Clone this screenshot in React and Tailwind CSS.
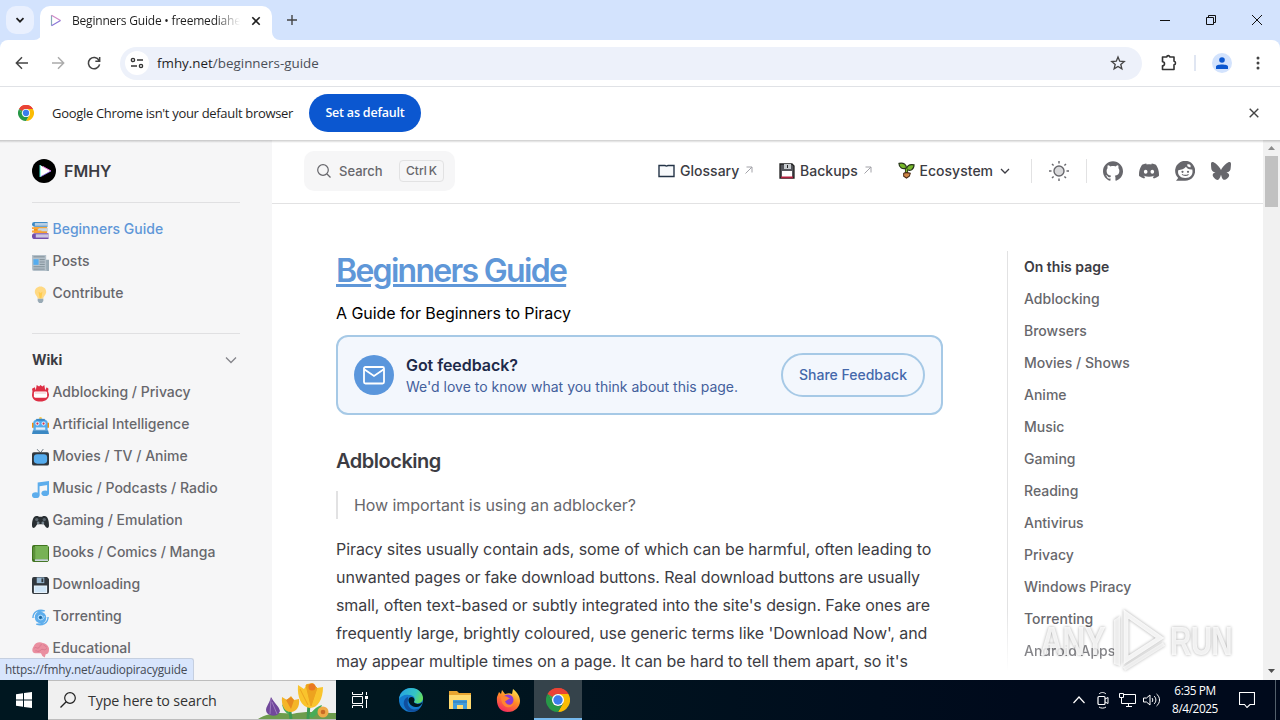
import React from "react";
import { SiGithub, SiDiscord, SiBluesky } from "react-icons/si";

function Svg({ box = "0 0 24 24", className = "", children }) {
  return (
    <svg viewBox={box} className={`shrink-0 ${className}`} fill="none">
      {children}
    </svg>
  );
}

function ChromeLogo({ className }) {
  return (
    <Svg box="0 0 48 48" className={className}>
      <path d="M24 24 3.2 12A24 24 0 0 1 44.8 12Z" fill="#ea4335" />
      <path d="M3.2 12 13.6 30 24 24V12Z" fill="#34a853" />
      <path d="M44.8 12H24V24L34.4 30 24 48A24 24 0 0 0 44.8 12Z" fill="#fbbc04" />
      <path d="M3.2 12A24 24 0 0 1 44.8 12H24A12 12 0 0 0 13.6 18Z" fill="#ea4335" />
      <path d="M3.2 12 13.6 30A12 12 0 0 0 34.4 30L24 48A24 24 0 0 1 3.2 12Z" fill="#279847" />
      <circle cx="24" cy="24" r="12" fill="#fff" />
      <circle cx="24" cy="24" r="9.4" fill="#3b7ded" />
    </Svg>
  );
}

const emoji = {
  books: (
    <>
      <path d="M5 0h28v10H5a5 5 0 0 1 0-10Z" fill="#3b88c3" />
      <path d="M6 2h28v6H6Z" fill="#b8cfe4" />
      <path d="M4 11h28v12H4Z" fill="#f4900c" />
      <path d="M12 13h22v7H12Z" fill="#c9d5de" />
      <path d="M0 11h14v4H0ZM0 18h20v4H0Z" fill="#f9a53b" />
      <path d="M6 24h29v12H6a6 6 0 0 1 0-12Z" fill="#744eaa" />
      <path d="M8 26h27v7H8Z" fill="#ccc6e2" />
    </>
  ),
  news: (
    <>
      <path d="M28 12h8v20a3 3 0 0 1-6 3Z" fill="#99aab5" />
      <path d="M0 2h30v34H4a4 4 0 0 1-4-4Z" fill="#b5c1ca" />
      <path d="M3 6h24M16 12h11M16 17h11M16 22h11M3 27h24M3 32h24" stroke="#7d8c96" strokeWidth="2" />
      <path d="M3 11h11v12H3Z" fill="#55acee" />
    </>
  ),
  bulb: (
    <>
      <path d="M18 1c7 0 12 5 12 11 0 7-6 9-6 15H12c0-6-6-8-6-15C6 6 11 1 18 1Z" fill="#ffd983" />
      <path d="M14 12l4 3 4-3-2 14h-4Z" fill="#ffcc4d" />
      <path d="M12 27h12v5l-3 4h-6l-3-4Z" fill="#99aab5" />
    </>
  ),
  badge: (
    <>
      <path d="M1 13 0 8l6-3 2 6 2-11 5 3 3-3 4 3 4-3 2 11 3-6 4 3-1 5 2 7c0 9-8 15-18 15S0 30 0 21Z" fill="#dd2e44" />
      <rect x="4" y="14" width="28" height="13" rx="3" fill="#fff" />
      <path d="M6 17h24" stroke="#e9a7b0" strokeWidth="1.500" />
    </>
  ),
  robot: (
    <>
      <circle cx="18" cy="3" r="3" fill="#ffcc4d" />
      <path d="M0 12h5v11H0ZM31 12h5v11h-5Z" fill="#f4900c" />
      <path d="M3 11c0-10 30-10 30 0v17H3Z" fill="#55acee" />
      <path d="M9 4h18v4H9Z" fill="#3b88c3" />
      <circle cx="11.500" cy="14" r="4.500" fill="#d9ebf8" />
      <circle cx="24.500" cy="14" r="4.500" fill="#d9ebf8" />
      <circle cx="11.500" cy="14" r="2.300" fill="#dd2e44" />
      <circle cx="24.500" cy="14" r="2.300" fill="#dd2e44" />
      <path d="M8 22h20v5H8Z" fill="#e4f0f8" />
      <path d="M2 28h32l2 8H0Z" fill="#3b88c3" />
    </>
  ),
  tv: (
    <>
      <path d="M10 0l8 8 6-8" stroke="#66757f" strokeWidth="2" />
      <rect x="0" y="7" width="36" height="28" rx="4" fill="#31373d" />
      <rect x="4" y="11" width="28" height="20" rx="7" fill="#55acee" />
    </>
  ),
  music: (
    <>
      <path d="M12 3 36 0v8L16 11v18h-4Z" fill="#5dadec" />
      <path d="M32 4h4v22h-4Z" fill="#5dadec" />
      <ellipse cx="8" cy="30" rx="8" ry="6" fill="#5dadec" />
      <ellipse cx="28" cy="26" rx="8" ry="6" fill="#5dadec" />
    </>
  ),
  game: (
    <>
      <path d="M7 7c5-2 6 0 8 1h6c2-1 3-3 8-1 5 1 7 12 7 19s-5 7-8 2l-3-4H11l-3 4c-3 5-8 5-8-2S2 8 7 7Z" fill="#292f33" />
      <circle cx="10" cy="14" r="3.500" fill="#59646c" />
      <circle cx="26" cy="14" r="3.500" fill="#59646c" />
      <circle cx="13" cy="21" r="3" fill="#77858f" />
      <circle cx="23" cy="21" r="3" fill="#77858f" />
    </>
  ),
  book: (
    <>
      <path d="M4 0h28l4 4v29l-3 3H4a4 4 0 0 1-4-4V4a4 4 0 0 1 4-4Z" fill="#3e721d" />
      <path d="M6 30h28v4H6Z" fill="#ccd6dd" />
      <path d="M6 2h28v28H6Z" fill="#77b255" />
      <path d="M2 4h5v26H2Z" fill="#5c913b" />
    </>
  ),
  disk: (
    <>
      <path d="M4 0h28l4 4v28a4 4 0 0 1-4 4H4a4 4 0 0 1-4-4V4a4 4 0 0 1 4-4Z" fill="#31373d" />
      <path d="M4 18h28v16H4Z" fill="#e9f3fb" />
      <path d="M10 1h16v12H10Z" fill="#99b9d3" />
      <path d="M20 3h4v8h-4Z" fill="#31373d" />
      <path d="M6 20h24v12H6Z" fill="#cfe5f7" />
    </>
  ),
  cyclone: (
    <>
      <circle cx="18" cy="18" r="12" fill="#5dadec" />
      <path d="M2 19C2 6 14 0 27 4 16 3 8 8 7 18M34 17c0 13-12 19-25 15 11 1 19-4 20-14" stroke="#5dadec" strokeWidth="3" />
      <path d="M23 18a5 5 0 1 0-5 5c6 0 8-4 8-8" stroke="#b9ddfb" strokeWidth="2" />
      <circle cx="18" cy="18" r="3" fill="#226699" />
    </>
  ),
  brain: (
    <>
      <path d="M3 12C6 4 15 1 23 4c8 1 14 8 13 15 0 6-3 9-7 9l-2 7-5-3-3-6H7C0 26-1 17 3 12Z" fill="#ea8fa0" />
      <path d="M5 15c4-4 6 3 10-1s1-7 6-6M14 21c4 2 5-6 10-3s6-4 8-1M24 8c5 1 4 5 7 5M7 21c2-2 4 2 8 1" stroke="#d27288" strokeWidth="1.500" />
    </>
  ),
};

function SideItem({ icon, label, active }) {
  return (
    <div className="flex h-8 items-center">
      <Svg box="0 0 36 36" className="mt-[3px] h-[17px] w-[17px]">{emoji[icon]}</Svg>
      <span className={`ml-[3.500px] whitespace-nowrap text-sm font-medium ${active ? "text-[#5f97d8]" : "text-[#67676c]"}`}>{label}</span>
    </div>
  );
}

const topItems = [
  ["books", "Beginners Guide"],
  ["news", "Posts"],
  ["bulb", "Contribute"],
];
const wikiItems = [
  ["badge", "Adblocking / Privacy"],
  ["robot", "Artificial Intelligence"],
  ["tv", "Movies / TV / Anime"],
  ["music", "Music / Podcasts / Radio"],
  ["game", "Gaming / Emulation"],
  ["book", "Books / Comics / Manga"],
  ["disk", "Downloading"],
  ["cyclone", "Torrenting"],
  ["brain", "Educational"],
];
const outline = ["Adblocking", "Browsers", "Movies / Shows", "Anime", "Music", "Gaming", "Reading", "Antivirus", "Privacy", "Windows Piracy", "Torrenting", "Android Apps"];

const paragraph = [
  "Piracy sites usually contain ads, some of which can be harmful, often leading to",
  "unwanted pages or fake download buttons. Real download buttons are usually",
  "small, often text-based or subtly integrated into the site's design. Fake ones are",
  "frequently large, brightly coloured, use generic terms like 'Download Now', and",
  "may appear multiple times on a page. It can be hard to tell them apart, so it's",
];

function TabStrip() {
  return (
    <div className="flex h-10 items-start bg-[#d3e3fd]">
      <div className="ml-1.5 mt-1.5 flex h-7 w-7 items-center justify-center rounded-[10px] bg-[#e9f0fe]">
        <Svg box="0 0 10 10" className="h-2.5 w-2.5"><path d="M1.500 3.200 5 6.700l3.500-3.500" stroke="#1f1f1f" strokeWidth="1.700" /></Svg>
      </div>
      <Svg box="0 0 8 8" className="mt-8 h-2 w-2"><path d="M-2 8h10V0a8 8 0 0 1-8 8Z" fill="#fff" /></Svg>
      <div className="-ml-[2px] mt-1.5 flex h-[34px] w-[232px] items-center rounded-t-[10px] bg-white pb-[5px]">
        <Svg box="0 0 12 13" className="ml-[10px] h-[13px] w-3">
          <path d="M1.500 1.200v10.300" stroke="#86a9b9" strokeWidth="1.200" />
          <path d="m1.500 1.200 9 5.300" stroke="#d18ac8" strokeWidth="1.200" />
          <path d="m1.500 11.700 9-5.200" stroke="#8b76d8" strokeWidth="1.200" />
        </Svg>
        <div className="ml-[10px] w-[168px] overflow-hidden whitespace-nowrap bg-linear-to-r from-[#1f1f1f] from-85% to-transparent bg-clip-text font-['Open_Sans',sans-serif] text-xs tracking-[-0.2px] text-transparent">Beginners Guide • freemediaheckyeah</div>
        <Svg box="0 0 10 10" className="ml-[11px] h-2.5 w-2.5"><path d="m1.300 1.300 7.400 7.400M8.700 1.300 1.300 8.700" stroke="#1f1f1f" strokeWidth="1.600" /></Svg>
      </div>
      <Svg box="0 0 8 8" className="mt-8 h-2 w-2"><path d="M8 8H0V0a8 8 0 0 0 8 8Z" fill="#fff" /></Svg>
      <Svg box="0 0 10 10" className="ml-[7px] mt-[15px] h-2.5 w-2.5"><path d="M5 0v10M0 5h10" stroke="#444" strokeWidth="1.400" /></Svg>
      <div className="ml-auto mr-[18px] mt-[15px] flex gap-[36px]">
        <Svg box="0 0 10 10" className="h-2.5 w-2.5"><path d="M0 5.500h10" stroke="#111" /></Svg>
        <Svg box="0 0 10 10" className="h-2.5 w-2.5"><path d="M.5 2.500h7v7h-7ZM2.500 2.500v-2h7v7h-2" stroke="#111" /></Svg>
        <Svg box="0 0 10 10" className="h-2.5 w-2.5"><path d="m0 0 10 10M10 0 0 10" stroke="#111" /></Svg>
      </div>
    </div>
  );
}

function Toolbar() {
  return (
    <div className="bg-[#d3e3fd]">
      <div className="flex h-[46px] items-center rounded-t-[8px] bg-white pl-[14px]">
        <Svg className="h-4 w-4"><path d="M21 12H4M12 3.500 3.500 12l8.500 8.500" stroke="#444" strokeWidth="2.200" /></Svg>
        <Svg className="ml-5 h-4 w-4"><path d="M3 12h17M12 3.500l8.500 8.500-8.500 8.500" stroke="#ababab" strokeWidth="2.200" /></Svg>
        <Svg className="ml-5 h-4 w-4"><path d="M19.500 8a8.500 8.500 0 1 0 .9 6M20.500 3v6.500H14" stroke="#444" strokeWidth="2.300" /></Svg>
        <div className="ml-[18px] flex h-[33px] w-[1022px] items-center rounded-full bg-[#edf1fa] pl-[5px]">
          <div className="flex h-6 w-6 items-center justify-center rounded-full bg-white">
            <Svg box="0 0 14 12" className="h-3 w-3.5">
              <circle cx="3" cy="3" r="1.600" stroke="#333" strokeWidth="1.400" />
              <circle cx="11" cy="9" r="1.600" stroke="#333" strokeWidth="1.400" />
              <path d="M7 3h6M1 9h6" stroke="#333" strokeWidth="1.400" />
            </Svg>
          </div>
          <div className="ml-2 whitespace-nowrap pt-px font-['Open_Sans',sans-serif] text-[13.400px] text-[#4b4f57]"><span className="text-[#1f1f1f]">fmhy.net</span>/beginners-guide</div>
          <Svg className="ml-auto mr-[16px] h-4 w-4"><path d="m12 3 2.600 6.300 6.700.5-5.100 4.400 1.600 6.600L12 17.200l-5.800 3.600 1.600-6.600L2.700 9.800l6.700-.5Z" stroke="#444" strokeWidth="2" /></Svg>
        </div>
        <Svg box="0 0 18 18" className="ml-[18px] h-[18px] w-[18px]"><path d="M2.500 3h4.300a1.500 1.400 0 0 1 3 0H14v4.300a1.500 1.700 0 0 1 0 3.400V15.500H2.500v-3.700a2 2 0 0 0 0-4Z" stroke="#333" strokeWidth="1.600" strokeLinejoin="round" /></Svg>
        <div className="ml-[16px] h-4 w-0.5 bg-[#e0e6f2]" />
        <div className="ml-4 flex h-5 w-5 items-center justify-center rounded-full bg-[#d3e3fd]">
          <Svg box="0 0 12 12" className="h-3 w-3"><circle cx="6" cy="3" r="2.800" fill="#0b57d0" /><path d="M0 12V9.500C0 6.700 12 6.700 12 9.500V12Z" fill="#0b57d0" /></Svg>
        </div>
        <Svg box="0 0 4 16" className="ml-6 h-4 w-1"><circle cx="2" cy="3" r="1.500" fill="#444" /><circle cx="2" cy="8" r="1.500" fill="#444" /><circle cx="2" cy="13" r="1.500" fill="#444" /></Svg>
      </div>
    </div>
  );
}

function InfoBar() {
  return (
    <div className="flex h-[54px] items-center border-t border-[#e0e2e6] bg-white pb-[2px] pl-[18px] font-['Open_Sans',sans-serif]">
      <ChromeLogo className="h-4 w-4" />
      <span className="ml-[18px] w-[241px] whitespace-nowrap pt-0.5 text-[13px] tracking-[-0.31px] text-[#1f1f1f]">Google Chrome isn't your default browser</span>
      <div className="ml-4 flex h-[38px] w-28 items-center justify-center whitespace-nowrap rounded-full bg-[#0b57d0] pt-px text-[12.500px] font-semibold tracking-[-0.2px] text-white">Set as default</div>
      <Svg box="0 0 10 10" className="ml-auto mr-[21px] h-2.5 w-2.5"><path d="m.7.7 8.600 8.600M9.300.7.7 9.300" stroke="#444" strokeWidth="1.400" /></Svg>
    </div>
  );
}

function Sidebar() {
  return (
    <aside className="w-[272px] shrink-0 bg-[#f6f6f7] px-8">
      <div className="flex h-[63px] items-center border-b border-[#e0e0e2]">
        <Svg className="h-6 w-6">
          <circle cx="12" cy="12" r="12" fill="#000" />
          <path d="M8 6v12l11-6Z" fill="#fff" />
          <path d="M8 6v12" stroke="#45e3cc" />
          <path d="m11 7.500 8 4.500" stroke="#f06ee0" />
          <path d="m9 17.500 10-5.500" stroke="#8c6ff0" strokeWidth=".8" />
        </Svg>
        <span className="ml-2 text-base font-semibold text-[#3c3c43]">FMHY</span>
      </div>
      <div className="h-[131px] border-b border-[#e0e0e2] pt-2.5">
        {topItems.map(([icon, label], i) => <SideItem key={label} icon={icon} label={label} active={i === 0} />)}
      </div>
      <div className="pt-2.5">
        <div className="flex h-8 items-center justify-between">
          <span className="text-sm font-bold text-[#3c3c43]">Wiki</span>
          <Svg box="0 0 12 12" className="mr-[3px] h-3 w-3"><path d="m1 3.500 5 5 5-5" stroke="#85858b" strokeWidth="1.300" /></Svg>
        </div>
        {wikiItems.map(([icon, label]) => <SideItem key={label} icon={icon} label={label} />)}
      </div>
    </aside>
  );
}

function OutArrow() {
  return <Svg box="0 0 8 8" className="mb-0.5 ml-[6px] h-2 w-2"><path d="M.5 7.500 7 1M1.500 1H7v5.500" stroke="#a2a2a8" strokeWidth="1" /></Svg>;
}

function Nav() {
  return (
    <header className="flex h-16 items-center border-b border-[#e2e2e3] pb-[2px] pl-8">
      <div className="flex h-10 w-[151px] shrink-0 items-center rounded-[10px] bg-[#f6f6f7] pl-[13px]">
        <Svg box="0 0 14 14" className="h-3.5 w-3.5"><circle cx="6" cy="6" r="5.300" stroke="#67676c" strokeWidth="1.200" /><path d="m10 10 3.500 3.500" stroke="#67676c" strokeWidth="1.200" /></Svg>
        <span className="ml-2 w-11 pt-0.5 text-[13px] font-medium text-[#67676c]">Search</span>
        <div className="ml-4 flex h-[22px] w-[45px] items-center justify-center rounded border border-[#e2e2e3] text-xs font-medium text-[#67676c]"><span>Ctrl</span><span className="ml-0.5">K</span></div>
      </div>
      <div className="ml-[203px] flex items-center text-sm font-medium text-[#3c3c43]">
        <Svg box="0 0 17 14" className="h-3.5 w-[17px]"><path d="M1 1.500h6l1.500.6 1.500-.6h6v11H1Z" fill="#f7f9fb" stroke="#243447" strokeWidth="1.400" /></Svg>
        <span className="ml-[5px] w-[59px] tracking-[0.02px]">Glossary</span><OutArrow />
        <Svg box="0 0 16 16" className="ml-[26px] h-4 w-4"><path d="M1 1h12l2 2v12H1Z" fill="#55565c" stroke="#222" strokeWidth="1.300" /><path d="M5 1h7v5H5Z" fill="#c8ccd0" /><path d="M8 2h1v3H8Z" fill="#222" /><path d="M3 8h10v6H3Z" fill="#fff" /><path d="M2 14.400h12" stroke="#b21f3d" strokeWidth="1.800" /></Svg>
        <span className="ml-[5px] w-[58px] tracking-[0.02px]">Backups</span><OutArrow />
        <Svg box="0 0 18 18" className="ml-[26px] h-[17px] w-[17px]">
          <path d="M9 12V7" stroke="#332d18" strokeWidth="3.300" />
          <path d="M9 6.500C5 8 1 6 1 1.500c5-1 8 1 8 5Z" fill="#76b82a" stroke="#26331b" strokeWidth="1.200" />
          <path d="M9 8c0-4 3-6 8-5 0 5-4 7-8 5Z" fill="#76b82a" stroke="#26331b" strokeWidth="1.200" />
          <path d="M9 12V7" stroke="#76b82a" strokeWidth="1.500" />
          <path d="M6 12c1-1 5-1 7 0l-1 3-3 2-3-2Z" fill="#cf8547" stroke="#4a2b17" strokeWidth="1.100" />
        </Svg>
        <span className="ml-[4.500px] w-[74px] tracking-[0.02px]">Ecosystem</span>
        <Svg box="0 0 10 10" className="ml-[6px] h-2.5 w-2.5"><path d="m1 3 4 4 4-4" stroke="#3c3c43" strokeWidth="1.300" /></Svg>
      </div>
      <div className="ml-[21.500px] h-6 w-px bg-[#e2e2e3]" />
      <Svg box="0 0 22 22" className="ml-[16px] h-[22px] w-[22px]">
        <circle cx="11" cy="11" r="5" fill="#d9d9db" stroke="#67676c" strokeWidth="1.400" />
        <path d="M11 1v2.500M11 18.500V21M1 11h2.500M18.500 11H21M4 4l1.600 1.600M16.400 16.400 18 18M18 4l-1.600 1.600M5.600 16.400 4 18" stroke="#67676c" strokeWidth="1.400" />
      </Svg>
      <div className="ml-[16px] h-6 w-px bg-[#e2e2e3]" />
      <div className="ml-4 flex gap-4 text-[#67676c]">
        <SiGithub size={20} />
        <SiDiscord size={20} />
        <Svg box="0 0 20 20" className="h-5 w-5">
          <path d="M1 19.800 3.200 17A10 10 0 1 1 10 19.800Z" fill="#67676c" />
          <path d="M3.200 9.200C6.500 9 9 8 11 5.800c.8 1.800 3 2.800 6.300 2.600 1.200 5-2 8.500-7 8.500s-8-3-7.100-7.700Z" fill="#fff" />
          <path d="M12 3.800c2.300-1.500 4.600.5 3.300 2.600l-2.600-.8Z" fill="#fff" />
          <circle cx="7.500" cy="10.800" r="1.100" fill="#67676c" /><circle cx="13" cy="10.800" r="1.100" fill="#67676c" />
          <path d="M7 13.400c1.600 1.300 5 1.300 6.500-.1" stroke="#67676c" strokeWidth="1.100" />
        </Svg>
        <SiBluesky size={20} />
      </div>
    </header>
  );
}

function Article() {
  return (
    <article className="ml-16 w-[607px] shrink-0 pt-[47px] text-base text-[#3c3c43]">
      <h1 className="whitespace-nowrap text-[32px] font-semibold leading-10 tracking-[-1.700px] text-[#5f97d8] underline underline-offset-auto"><span className="tracking-[-1.700px]">Beginners Guide</span></h1>
      <p className="mt-2 leading-7 tracking-[-0.06px] text-black">A Guide for Beginners to Piracy</p>
      <div className="mt-2 flex h-20 items-center rounded-xl border-2 border-[#a6c9e6] bg-[#f3f7fd] px-4">
        <div className="flex h-10 w-10 items-center justify-center rounded-full bg-[#5a96dc]">
          <Svg className="h-6 w-6"><rect x="2" y="4" width="20" height="16.500" rx="1.500" stroke="#fff" strokeWidth="1.800" /><path d="m2.500 6.500 9.500 6.500 9.500-6.500" stroke="#fff" strokeWidth="1.800" /></Svg>
        </div>
        <div className="ml-3 whitespace-nowrap">
          <div className="font-semibold leading-6 tracking-[-0.06px] text-[#1e2a4a]">Got feedback?</div>
          <div className="text-sm leading-5 text-[#43609c]">We'd love to know what you think about this page.</div>
        </div>
        <div className="ml-auto flex h-11 w-36 items-center justify-center whitespace-nowrap rounded-full border-2 border-[#a6c9e6] text-sm font-medium text-[#4468ab]">Share Feedback</div>
      </div>
      <h2 className="mt-8 text-xl font-semibold leading-7 tracking-[-0.48px]">Adblocking</h2>
      <blockquote className="mt-4 border-l-2 border-[#e2e2e3] pl-4 leading-7 tracking-[-0.07px] text-[#67676c]">How important is using an adblocker?</blockquote>
      <p className="mt-4 leading-7 tracking-[-0.08px]">{paragraph.map((line) => <span key={line} className="block whitespace-nowrap">{line}</span>)}</p>
    </article>
  );
}

function Outline() {
  return (
    <aside className="ml-16 mt-[47px] flex w-60">
      <div className="h-[420px] w-px bg-linear-to-b from-[#e2e2e3] from-85% to-white" />
      <div className="pl-4 text-sm text-[#67676c]">
        <div className="h-8 font-semibold leading-8 text-[#3c3c43]">On this page</div>
        {outline.map((item) => <div key={item} className={`h-8 whitespace-nowrap font-[450] leading-8 ${item === "Android Apps" ? "opacity-80" : ""}`}>{item}</div>)}
      </div>
    </aside>
  );
}

function Scrollbar() {
  return (
    <div className="flex w-[17px] flex-col items-center bg-[#f1f1f1]">
      <Svg box="0 0 7 4" className="mt-1.5 h-1 w-[7px]"><path d="M0 4h7L3.500 0Z" fill="#8b8b8b" /></Svg>
      <div className="mt-1.5 h-[51px] w-[13px] bg-[#c1c1c1]" />
      <Svg box="0 0 7 4" className="mb-[7px] mt-auto h-1 w-[7px]"><path d="M0 0h7L3.500 4Z" fill="#505050" /></Svg>
    </div>
  );
}

function Watermark() {
  return (
    <div className="absolute bottom-[6px] right-[46px] flex h-[66px] items-center gap-0.5 font-['Liberation_Sans',sans-serif] text-[40px] font-bold text-white/80 [filter:drop-shadow(0_0_1.500px_rgba(0,0,0,.4))]">
      <span className="w-[68px] origin-left scale-x-[0.8] tracking-tight">ANY</span>
      <Svg box="0 0 58 66" className="h-[66px] w-[58px]">
        <path d="M4 56V12l6-4v50Z" fill="#fff" fillOpacity=".75" />
        <path d="M16 6v46l34-22Z" stroke="#fff" strokeOpacity=".85" strokeWidth="5" />
        <path d="m14 61 40-25" stroke="#fff" strokeOpacity=".7" strokeWidth="4" />
      </Svg>
      <span className="w-[64px] origin-left scale-x-[0.74] tracking-tight">RUN</span>
    </div>
  );
}

function Flowers() {
  return (
    <Svg box="0 0 78 38" className="ml-auto h-[38px] w-[78px]">
      <path d="M0 38c10-6 20-7 34-5 16-4 32-1 44-1v6Z" fill="#6d9c4d" />
      <path d="M9 32c-3-5 2-8 4-16 3 6 8 9 9 14-2 6-9 6-13 2Z" fill="#71489b" />
      <path d="m13 18-1 15M14 21l5 12" stroke="#9c7bbd" />
      <path d="M33 38 31 24M50 38l1-16" stroke="#3c9a52" strokeWidth="3" />
      <path d="M31 34c-5-4-6-6-7-11l7 8ZM51 35c4-6 7-9 13-11-2 6-5 10-10 13Z" fill="#48ac58" />
      <path d="m24 16 5 3 4-4 3 4 5-1c1 8-3 13-8 13-6 0-10-6-9-15Z" fill="#f4b529" />
      <path d="m28 19 5 9 3-9-3-3Z" fill="#e68a21" />
      <path d="m40 4 6 4 3-5 6-1 4 5 6-1c0 12-5 21-13 21C43 26 39 16 40 4Z" fill="#f9c42d" />
      <path d="m48 4 5 21 6-18-5-4ZM42 8l8 16" fill="#eda31f" stroke="#eda31f" />
      <circle cx="54" cy="6" r="3.500" fill="#e97822" />
      <circle cx="65" cy="31" r="5.500" fill="#efaa48" /><circle cx="65" cy="31" r="2.300" fill="#c96b25" />
    </Svg>
  );
}

function Taskbar() {
  return (
    <footer className="flex h-10 items-center bg-linear-to-r from-[#001720] from-30% to-[#000a1c] to-80% text-white">
      <div className="flex h-10 w-12 items-center justify-center">
        <Svg box="0 0 16 16" className="h-4 w-4"><path d="m0 2.300 7-1v6.200H0ZM8 1.100 16 0v7.500H8ZM0 8.500h7v6.200l-7-1ZM8 8.500h8V16l-8-1.100Z" fill="#fff" /></Svg>
      </div>
      <div className="flex h-10 w-72 items-center border-y border-[#bdbdbd] bg-[#f0f0f0] pl-3">
        <Svg box="0 0 16 16" className="h-4 w-4"><circle cx="10" cy="6" r="5.300" stroke="#222" strokeWidth="1.200" /><path d="M6.200 9.800.5 15.500" stroke="#222" strokeWidth="1.300" /></Svg>
        <span className="ml-3 whitespace-nowrap pt-px font-['Open_Sans',sans-serif] text-[14.300px] tracking-[-0.15px] text-[#333]">Type here to search</span>
        <Flowers />
      </div>
      <Svg box="0 0 16 16" className="ml-4 h-4 w-4"><path d="M.5 0v2.500h10V0M.5 16v-2.500h10V16M.5 4.500h10v7H.5ZM14.500 0v3M14.500 7.500V16" stroke="#fff" /><path d="M13 4h3v3h-3Z" fill="#fff" /></Svg>
      <Svg className="ml-[31px] h-6 w-6">
        <defs>
          <linearGradient id="edge-a" x1="3" y1="3" x2="23" y2="12" gradientUnits="userSpaceOnUse"><stop stopColor="#28a7df" /><stop offset=".6" stopColor="#35c5c3" /><stop offset="1" stopColor="#68df55" /></linearGradient>
          <linearGradient id="fox-a" x1="18" y1="1" x2="6" y2="23" gradientUnits="userSpaceOnUse"><stop stopColor="#ffe14d" /><stop offset=".45" stopColor="#ff8b25" /><stop offset="1" stopColor="#f5295f" /></linearGradient>
        </defs>
        <circle cx="12" cy="12" r="12" fill="#147bce" />
        <path d="M0 11C1 4 6 0 12 0c7 0 12 5 12 10 0 5-6 7-9 4 2-5-1-7-5-7-4-1-8 1-10 4Z" fill="url(#edge-a)" />
        <path d="M9 12c-2 7 5 12 12 8-4 6-14 5-16-3-1-4 1-7 4-8Z" fill="#104f9e" />
        <path d="M9.500 12c0-4 6-4 6 0 0 1-.8 1.800-.5 2.500 2 2 6 2 8.500-.5-1 4-4 5.500-7 5-4-.5-7-3.500-7-7Z" fill="#001720" />
      </Svg>
      <Svg box="0 0 22 20" className="ml-[26px] h-5 w-[22px]"><path d="M0 1h8l2 2h12v16H0Z" fill="#e8a531" /><path d="M0 5h22v14H0Z" fill="#ffda70" /><path d="M4 19v-9h14v9h-4v-4H8v4Z" fill="#439ddb" /><path d="M4 12h14" stroke="#2d79b8" /></Svg>
      <Svg className="ml-[25px] h-6 w-6">
        <path d="M1 9 3 4l2 2 1-4 3 4c3-1 5-1 7 0l1-5c5 4 7 8 7 12 0 6-5 11-12 11S0 19 1 9Z" fill="url(#fox-a)" />
        <circle cx="12" cy="12" r="5.500" fill="#8d3bd3" /><path d="M5 9c3-2 6-1 9 2-3 0-3 2-5 2 1 4 5 5 9 2-2 7-13 6-13-6Z" fill="#ff8430" />
      </Svg>
      <div className="ml-[14px] flex h-10 w-12 items-center justify-center border-b-2 border-[#76b9ed] bg-[#35434b]"><ChromeLogo className="mt-0.5 h-6 w-6" /></div>
      <Svg box="0 0 12 8" className="ml-auto h-2 w-3"><path d="m.5 7 5.500-6 5.500 6" stroke="#fff" strokeWidth="1.200" /></Svg>
      <Svg box="0 0 12 18" className="ml-3 h-[18px] w-3"><rect x="1" y="5.500" width="7" height="8" rx="1" stroke="#fff" strokeWidth="1.200" /><path d="m8 8 3-1.500v6L8 11M2 3c2-2 5-2 7 0M2 16c2 1.500 5 1.500 7 0" stroke="#fff" /></Svg>
      <Svg box="0 0 17 14" className="ml-[10px] h-3.5 w-[17px]"><path d="M4.500 1.500h12v9h-12M9.500 10.500v3M7 13.500h6M.5.500h4v4h-4ZM2.500 4.500v6h5" stroke="#fff" /></Svg>
      <Svg box="0 0 17 14" className="ml-[7px] h-3.5 w-[17px]"><path d="M.5 5h3L7 2v10L3.500 9h-3ZM9 5c1 1 1 3 0 4M11 3c2.500 2 2.500 6 0 8M13.500 1c4 3 4 9 0 12" stroke="#fff" /></Svg>
      <div className="ml-[10px] w-[50px] whitespace-nowrap pb-0.5 text-center font-['Open_Sans',sans-serif] text-[11.800px] leading-[18px] tracking-[-0.4px]"><div>6:35 PM</div><div>8/4/2025</div></div>
      <Svg box="0 0 16 16" className="ml-[19px] h-4 w-4"><path d="M.5.500h15v12H11L8 15.500 5.500 12.500h-5Z" stroke="#fff" strokeWidth="1.100" /></Svg>
      <div className="ml-5 mr-1 h-10 w-px bg-[#53606c]" />
    </footer>
  );
}

export default function App() {
  return (
    <div className="flex h-[720px] w-[1280px] flex-col overflow-hidden bg-white font-['Inter',sans-serif]">
      <TabStrip />
      <Toolbar />
      <InfoBar />
      <div className="relative flex h-[540px] overflow-hidden">
        <Sidebar />
        <main className="flex w-[991px] shrink-0 flex-col">
          <Nav />
          <div className="flex"><Article /><Outline /></div>
        </main>
        <Scrollbar />
        <div className="absolute inset-x-0 top-0 h-[3px] bg-linear-to-b from-black/20 to-transparent" />
        <Watermark />
        <div className="absolute bottom-0 left-0 flex h-[22px] w-[194px] items-center whitespace-nowrap rounded-tr-[3px] border-r border-t border-[#c5cfe0] bg-[#d8e5fc] pl-[5px] pt-px font-['Open_Sans',sans-serif] text-[11.800px] tracking-[-0.19px] text-[#454b55]">https://fmhy.net/audiopiracyguide</div>
      </div>
      <Taskbar />
    </div>
  );
}
